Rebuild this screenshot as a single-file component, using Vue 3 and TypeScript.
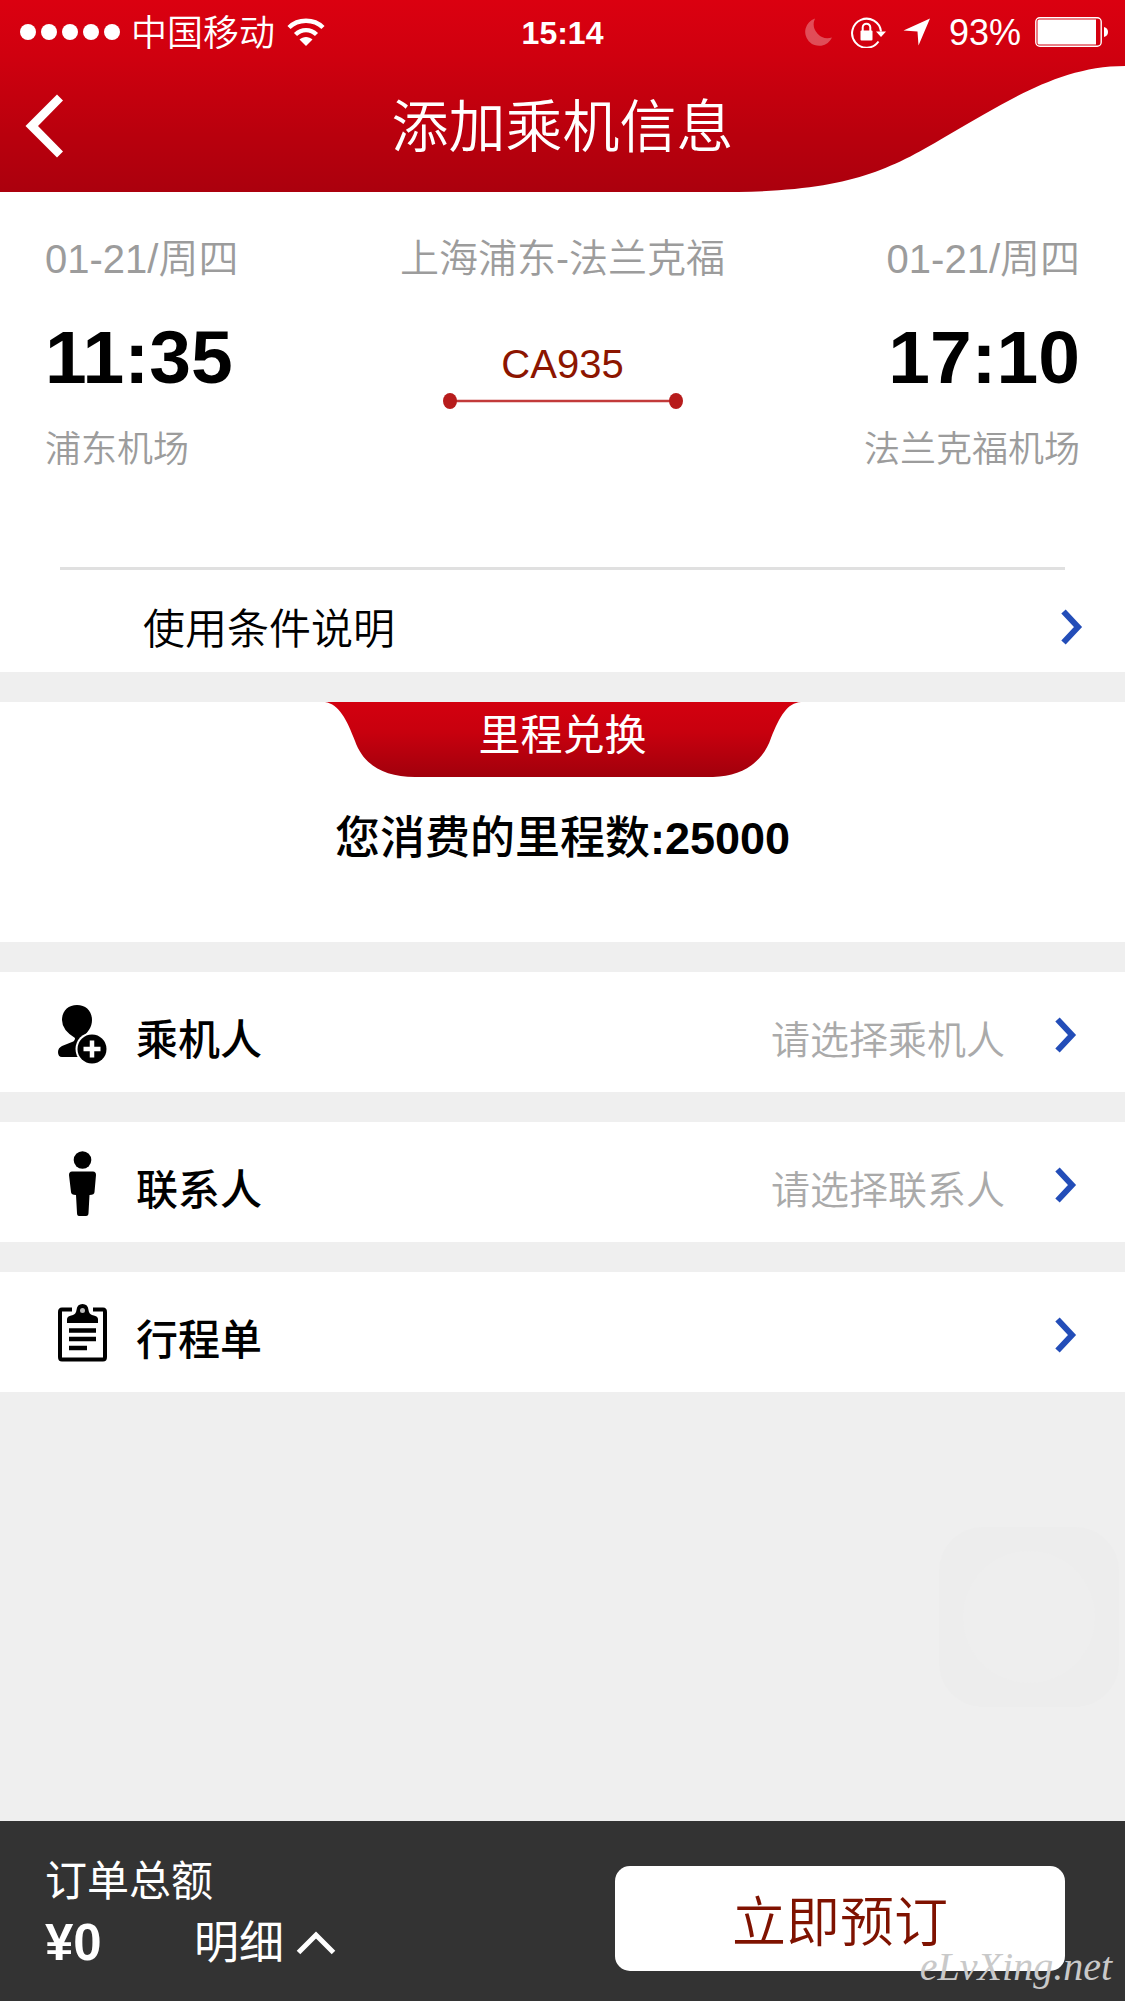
<script setup lang="ts">
interface Leg {
  date: string
  time: string
  airport: string
}

interface FormRow {
  id: 'passenger' | 'contact' | 'itinerary'
  label: string
  hint: string
}

const departure: Leg = { date: '01-21/周四', time: '11:35', airport: '浦东机场' }
const arrival: Leg = { date: '01-21/周四', time: '17:10', airport: '法兰克福机场' }

const rows: FormRow[] = [
  { id: 'passenger', label: '乘机人', hint: '请选择乘机人' },
  { id: 'contact', label: '联系人', hint: '请选择联系人' },
  { id: 'itinerary', label: '行程单', hint: '' },
]
</script>

<template>
  <div class="page">
    <header class="top">
      <svg class="top-bg" viewBox="0 0 1125 192" preserveAspectRatio="none" aria-hidden="true">
        <defs>
          <linearGradient id="topFill" x1="0" y1="0" x2="0" y2="1">
            <stop offset="0" stop-color="#db0010" />
            <stop offset="0.3" stop-color="#cf000f" />
            <stop offset="0.7" stop-color="#b9000d" />
            <stop offset="1" stop-color="#ab000d" />
          </linearGradient>
        </defs>
        <path d="M0 0H1125V66C1059 66 1007 102 950 134C890 170 850 190 738 192H0Z" fill="url(#topFill)" />
      </svg>

      <div class="status">
        <div class="status-left">
          <span class="signal"><i v-for="n in 5" :key="n"></i></span>
          <span class="carrier">中国移动</span>
          <svg class="wifi" width="38" height="28" viewBox="0 0 38 28" fill="none" stroke="#fff" aria-hidden="true">
            <path d="M2 9.5C11 0.5 27 0.5 36 9.5" stroke-width="4.4" />
            <path d="M8.5 16.5C14.5 10.6 23.5 10.6 29.5 16.5" stroke-width="4.4" />
            <path d="M12.5 21.5C16 18 22 18 25.5 21.5L19 28Z" fill="#fff" stroke="none" />
          </svg>
        </div>
        <span class="clock">15:14</span>
        <div class="status-right">
          <svg width="28" height="28" viewBox="0 0 28 28" aria-hidden="true">
            <path d="M10 0.5A14 14 0 1 0 27 19.5A14 14 0 0 1 10 0.5Z" fill="#fff" opacity="0.3" />
          </svg>
          <svg class="lock" width="36" height="32" viewBox="0 0 36 32" aria-hidden="true">
            <path d="M27.5 25.5A14.5 14.5 0 1 1 30 15.5" fill="none" stroke="#fff" stroke-width="2" />
            <path d="M25 15.5H35L30 21Z" fill="#fff" />
            <rect x="9.5" y="14.5" width="12" height="10" rx="1" fill="#fff" />
            <path d="M11.7 15V11.5A3.8 3.8 0 0 1 19.3 11.5V15" fill="none" stroke="#fff" stroke-width="2" />
          </svg>
          <svg class="locate" width="28" height="28" viewBox="0 0 28 28" aria-hidden="true">
            <path d="M27 0.5L15.5 27.5L14.5 13.5L0.5 12.5Z" fill="#fff" />
          </svg>
          <span class="percent">93%</span>
          <svg class="battery" width="74" height="30" viewBox="0 0 74 30" aria-hidden="true">
            <rect x="0.8" y="0.8" width="65.4" height="28.4" rx="4" fill="none" stroke="#fff" stroke-width="1.4" />
            <path d="M4 2.5H61V27.5H4Q2.5 27.5 2.5 26V4Q2.5 2.5 4 2.5Z" fill="#fff" />
            <path d="M69 10Q73 11 73 15T69 20Z" fill="#fff" />
          </svg>
        </div>
      </div>

      <nav class="nav">
        <button class="back" type="button" aria-label="返回">
          <svg width="40" height="64" viewBox="0 0 40 64" aria-hidden="true">
            <path d="M32 0.5L38 6.5L13 32L38 57.5L32 63.5L0.5 32Z" fill="#fff" />
          </svg>
        </button>
        <h1 class="title">添加乘机信息</h1>
      </nav>
    </header>

    <main class="content">
      <section class="card">
        <div class="flight">
          <div class="leg">
            <span class="date">{{ departure.date }}</span>
            <strong class="time">{{ departure.time }}</strong>
            <span class="airport">{{ departure.airport }}</span>
          </div>
          <div class="route">
            <span class="cities">上海浦东-法兰克福</span>
            <span class="number">CA935</span>
            <svg width="240" height="16" viewBox="0 0 240 16" aria-hidden="true">
              <path d="M7 8H233" stroke="#c23a3a" stroke-width="2.5" />
              <ellipse cx="7" cy="8" rx="7" ry="8" fill="#b71c1c" />
              <ellipse cx="233" cy="8" rx="7" ry="8" fill="#b71c1c" />
            </svg>
          </div>
          <div class="leg leg-end">
            <span class="date">{{ arrival.date }}</span>
            <strong class="time">{{ arrival.time }}</strong>
            <span class="airport">{{ arrival.airport }}</span>
          </div>
        </div>
        <button class="terms" type="button">
          <span class="terms-label">使用条件说明</span>
          <svg width="22" height="36" viewBox="0 0 22 36" aria-hidden="true">
            <path d="M2.5 2.5L17 18L2.5 33.5" fill="none" stroke="#234db8" stroke-width="6" />
          </svg>
        </button>
      </section>

      <section class="card miles">
        <div class="ribbon">
          <svg class="ribbon-bg" width="476" height="75" viewBox="0 0 476 75" aria-hidden="true">
            <defs>
              <linearGradient id="ribbonFill" x1="0" y1="0" x2="0" y2="1">
                <stop offset="0" stop-color="#d3000f" />
                <stop offset="0.4" stop-color="#c8000e" />
                <stop offset="1" stop-color="#a1000c" />
              </linearGradient>
            </defs>
            <path d="M0 0C14 2 22 18 30 39C38 62 58 75 90 75H388C418 74 438 60 446 36C455 14 462 1 476 0Z" fill="url(#ribbonFill)" />
          </svg>
          <h2 class="ribbon-text">里程兑换</h2>
        </div>
        <p class="miles-total">您消费的里程数<b>:25000</b></p>
      </section>

      <button v-for="row in rows" :key="row.id" class="card row" type="button">
        <svg v-if="row.id === 'passenger'" class="row-icon" width="50" height="72" viewBox="0 0 50 72" aria-hidden="true">
          <path d="M19 4C28 4 34 10 34 19C34 26 30 31 25 36Q24 38 24 40Q19 45 20 56H4Q0 56 0 51Q0 47 4 45L14 41Q17 40 17 37Q4 29 4 19C4 10 10 4 19 4Z" />
          <circle cx="34" cy="48" r="16.5" fill="#fff" />
          <circle cx="34" cy="48" r="14.5" />
          <path d="M34 39.5V56.5M25.5 48H42.5" stroke="#fff" stroke-width="4.5" />
        </svg>
        <svg v-else-if="row.id === 'contact'" class="row-icon" width="50" height="72" viewBox="0 0 50 72" aria-hidden="true">
          <circle cx="24.5" cy="9" r="8.8" />
          <path d="M14 20.5H35Q38 20.5 38 24L36.5 41Q36.5 44 31.5 44L30.5 62Q30.5 65 28 65H21Q19 65 19 62L18 44Q13 44 13 41L11 24Q11 20.5 14 20.5Z" />
        </svg>
        <svg v-else class="row-icon" width="50" height="72" viewBox="0 0 50 72" aria-hidden="true">
          <path d="M14 8.5H4Q2 8.5 2 11V56Q2 58.5 4 58.5H45Q47 58.5 47 56V11Q47 8.5 45 8.5H35" fill="none" stroke="#000" stroke-width="4" />
          <path d="M9 22V18Q9 15 15 14Q18 13 18.5 9Q19 3 24.5 3T30.5 9Q31 13 34 14Q40 15 40 18V22Z" />
          <circle cx="24.5" cy="9.5" r="2.5" fill="#bbb" />
          <path d="M11 29.5H38M11 38H38M11 47H29" stroke="#000" stroke-width="4.5" />
        </svg>
        <span class="row-label">{{ row.label }}</span>
        <span class="row-hint">{{ row.hint }}</span>
        <svg width="22" height="36" viewBox="0 0 22 36" aria-hidden="true">
          <path d="M2.5 2.5L17 18L2.5 33.5" fill="none" stroke="#234db8" stroke-width="6" />
        </svg>
      </button>
    </main>

    <div class="assist" aria-hidden="true"></div>

    <footer class="bar">
      <div class="total">
        <span class="total-label">订单总额</span>
        <div class="total-line">
          <b class="price">¥0</b>
          <button class="detail" type="button">
            <span class="detail-label">明细</span>
            <svg width="40" height="24" viewBox="0 0 40 24" aria-hidden="true">
              <path d="M2.5 21.5L20 4L37.5 21.5" fill="none" stroke="#fff" stroke-width="5" />
            </svg>
          </button>
        </div>
      </div>
      <button class="book" type="button">立即预订</button>
      <span class="mark">eLvXing.net</span>
    </footer>
  </div>
</template>

<style>
body {
  margin: 0;
  background: #efefef;
}
</style>

<style scoped>
.page {
  position: relative;
  display: flex;
  flex-direction: column;
  min-height: 100vh;
  background: #efefef;
  color: #000;
  font-family: "Liberation Sans", "Noto Sans CJK SC", sans-serif;
  font-weight: 350;
}

button {
  margin: 0;
  padding: 0;
  border: 0;
  background: none;
  color: inherit;
  font: inherit;
  cursor: pointer;
}

svg {
  display: block;
  flex: none;
}

.top {
  position: relative;
  background: #fff;
  color: #fff;
}

.top-bg {
  position: absolute;
  inset: 0;
  width: 100%;
  height: 100%;
}

.status {
  position: relative;
  display: grid;
  grid-template-columns: 1fr auto 1fr;
  align-items: center;
  height: 60px;
  padding: 0 16px;
  font-size: 36px;
  line-height: 60px;
}

.status-left,
.status-right {
  display: flex;
  align-items: center;
}

.status-right {
  justify-content: flex-end;
}

.signal {
  display: flex;
  gap: 5px;
  margin-left: 4px;
}

.signal i {
  width: 16px;
  height: 16px;
  border-radius: 50%;
  background: #fff;
}

.carrier {
  margin-left: 11px;
  padding-top: 4px;
}

.wifi {
  margin-left: 12px;
}

.clock {
  padding-top: 2px;
  font-size: 32px;
  font-weight: 700;
}

.lock {
  margin-left: 18px;
}

.locate {
  margin-left: 16px;
}

.percent {
  margin-left: 18px;
  padding-top: 2px;
}

.battery {
  margin-left: 14px;
}

.nav {
  position: relative;
  display: grid;
  grid-template-columns: 1fr auto 1fr;
  align-items: center;
  height: 132px;
}

.back {
  justify-self: start;
  padding-left: 25px;
}

.title {
  margin: 0;
  padding-top: 2px;
  font-size: 57px;
  font-weight: 350;
  line-height: 72px;
}

.content {
  display: flex;
  flex: 1;
  flex-direction: column;
  gap: 30px;
}

.card {
  background: #fff;
}

.flight {
  display: grid;
  grid-template-columns: 1fr auto 1fr;
  padding: 37px 45px 90px;
}

.leg,
.route {
  display: flex;
  flex-direction: column;
}

.leg-end {
  align-items: flex-end;
}

.route {
  align-items: center;
}

.date,
.cities {
  color: #9c9c9c;
  font-size: 40px;
  line-height: 60px;
}

.cities {
  font-size: 39px;
}

.time {
  margin-top: 23px;
  font-size: 75px;
  font-weight: 700;
  line-height: 90px;
}

.airport {
  margin-top: 21px;
  color: #9c9c9c;
  font-size: 36px;
  line-height: 54px;
}

.number {
  margin: 51px 0 5px;
  color: #8c1500;
  font-size: 40px;
  line-height: 48px;
}

.terms {
  display: flex;
  align-items: center;
  justify-content: space-between;
  width: calc(100% - 120px);
  height: 105px;
  box-sizing: border-box;
  margin: 0 60px;
  border-top: 3px solid #e0e0e0;
  padding-top: 12px;
  padding-left: 83px;
  font-size: 42px;
  line-height: 60px;
}

.terms-label {
  padding-top: 6px;
}

.terms svg {
  margin-right: -18px;
}

.miles {
  padding-bottom: 73px;
  text-align: center;
}

.ribbon {
  position: relative;
  display: flex;
  justify-content: center;
  height: 75px;
}

.ribbon-bg {
  position: absolute;
  top: 0;
  left: 50%;
  margin-left: -238px;
}

.ribbon-text {
  position: relative;
  margin: 0;
  padding-top: 4px;
  color: #fff;
  font-size: 42px;
  font-weight: 400;
  line-height: 60px;
}

.miles-total {
  margin: 32px 0 0;
  font-size: 45px;
  font-weight: 500;
  line-height: 60px;
}

.miles-total b {
  font-weight: 700;
}

.row {
  display: flex;
  align-items: center;
  width: 100%;
  height: 120px;
  box-sizing: border-box;
  padding: 6px 48px 0 58px;
  text-align: left;
  line-height: 60px;
}

.row-icon {
  margin-top: 4px;
}

.row-label {
  padding-top: 12px;
  padding-left: 28px;
  font-size: 42px;
  font-weight: 500;
}

.row-hint {
  flex: 1;
  padding-top: 12px;
  padding-right: 50px;
  color: #aaa;
  font-size: 39px;
  text-align: right;
}

.assist {
  position: absolute;
  right: 6px;
  bottom: 294px;
  display: grid;
  place-items: center;
  width: 180px;
  height: 180px;
  border-radius: 44px;
  background: #ededed;
}

.assist::after {
  width: 132px;
  height: 132px;
  border-radius: 50%;
  background: #eee;
  content: "";
}

.bar {
  position: relative;
  display: flex;
  align-items: center;
  justify-content: space-between;
  height: 180px;
  padding: 0 60px 0 45px;
  background: #333;
  color: #fff;
}

.total {
  display: flex;
  flex-direction: column;
  padding-top: 4px;
  font-weight: 400;
}

.total-label {
  font-size: 42px;
  line-height: 60px;
}

.total-line {
  display: flex;
  align-items: center;
  line-height: 60px;
}

.price {
  width: 149px;
  font-size: 51px;
  font-weight: 700;
}

.detail {
  display: flex;
  align-items: center;
  gap: 12px;
  font-size: 45px;
}

.detail-label {
  padding-top: 2px;
}

.book {
  width: 40vw;
  height: 105px;
  margin-top: 15px;
  border-radius: 15px;
  background: #fff;
  color: #7f1200;
  font-size: 54px;
}

.mark {
  position: absolute;
  right: 13px;
  bottom: 10px;
  color: #c9c9c9;
  font-family: "Liberation Serif", cursive;
  font-size: 40px;
  font-style: italic;
  line-height: 48px;
}
</style>
